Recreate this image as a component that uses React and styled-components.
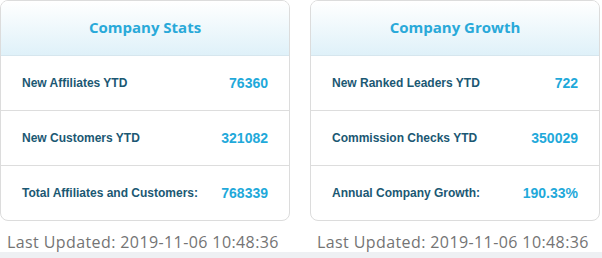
import styled, { createGlobalStyle } from 'styled-components';

const GlobalStyle = createGlobalStyle`
  body {
    margin: 0;
    background: #eef0f3;
    font-family: "Liberation Sans", Arial, sans-serif;
  }
`;

const Page = styled.div`
  background: #fff;
  height: 252px;
  display: grid;
  grid-template-columns: 290px 290px;
  column-gap: 20px;
  align-content: start;
`;

const Column = styled.div`
  display: flex;
  flex-direction: column;
`;

const Card = styled.div`
  border: 1px solid #dcdcdc;
  border-radius: 8px;
  overflow: hidden;
  height: 221px;
  box-sizing: border-box;
  display: flex;
  flex-direction: column;
`;

const Header = styled.div`
  height: 55px;
  flex: none;
  box-sizing: border-box;
  border-bottom: 1px solid #d6e6ee;
  background: linear-gradient(to bottom, #ffffff 0%, #dff1f9 100%);
  display: flex;
  align-items: center;
  justify-content: center;
  font-family: "Open Sans", sans-serif;
  font-weight: 700;
  font-size: 15px;
  color: #29a9d9;
  padding-bottom: 2px;
`;

const Row = styled.div`
  height: 55px;
  flex: none;
  box-sizing: border-box;
  border-bottom: ${({ $last }) => ($last ? 'none' : '1px solid #dddddd')};
  display: flex;
  align-items: center;
  justify-content: space-between;
  padding: 0 21px 1px 21px;
`;

const Label = styled.span`
  font-weight: 700;
  font-size: 12px;
  color: #1b5873;
`;

const Value = styled.span`
  font-weight: 700;
  font-size: 14px;
  color: #1fa9da;
`;

const Updated = styled.div`
  padding: 10px 0 0 7px;
  font-family: "Open Sans", sans-serif;
  font-size: 16px;
  letter-spacing: 0.4px;
  color: #747474;
  white-space: nowrap;
`;

const panels = [
  {
    title: 'Company Stats',
    rows: [
      ['New Affiliates YTD', '76360'],
      ['New Customers YTD', '321082'],
      ['Total Affiliates and Customers:', '768339'],
    ],
  },
  {
    title: 'Company Growth',
    rows: [
      ['New Ranked Leaders YTD', '722'],
      ['Commission Checks YTD', '350029'],
      ['Annual Company Growth:', '190.33%'],
    ],
  },
];

export default function App() {
  return (
    <>
      <GlobalStyle />
      <Page>
        {panels.map((p) => (
          <Column key={p.title}>
            <Card>
              <Header>{p.title}</Header>
              {p.rows.map(([label, value], i) => (
                <Row key={label} $last={i === p.rows.length - 1}>
                  <Label>{label}</Label>
                  <Value>{value}</Value>
                </Row>
              ))}
            </Card>
            <Updated>Last Updated: 2019-11-06 10:48:36</Updated>
          </Column>
        ))}
      </Page>
    </>
  );
}
